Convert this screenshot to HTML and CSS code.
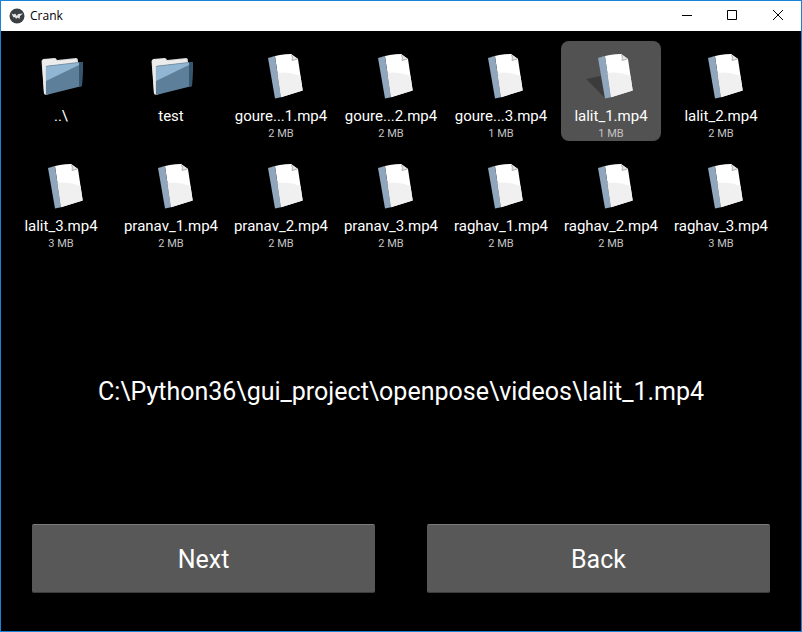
FILE: index.html
```
<!DOCTYPE html>
<html lang="en">
<head>
<meta charset="utf-8">
<title>Crank</title>
<link rel="stylesheet" href="styles.css">
</head>
<body>
<svg class="defs" aria-hidden="true">
  <symbol id="folder" viewBox="0 0 50 50">
    <path d="M5.500 11 7 9 19 8Q20 8 21 10L40 8Q42 8 42 11L42 34 10 45 8 44Z" fill="#d4d4d4"/>
    <path d="M6 11 7 9.500 19 8.500 21 11 40 9 41 12 12 16Q9.500 16 9.500 18L9.500 44 8 43Z" fill="#ececec"/>
    <path d="M10 17Q10 16 12 16L47 12 46 36 10 45Z" fill="#5d7f99"/>
    <path d="M10 17Q10 16 12 16L43 12.500 43 15 10 31Z" fill="#91b6d3"/>
    <path d="M43 12.500 47 12 46 36 43 37Z" fill="#36566e"/>
    <path d="M10 17Q10 16 12 16L43 12.500" fill="none" stroke="#6f8799" stroke-width=".7"/>
  </symbol>
  <symbol id="document" viewBox="0 0 50 50">
    <path d="M0 29 15 26 19 48Z" fill="#000" opacity=".27"/>
    <path d="M12 8Q24 4 35 4L42 9 46.700 40.500 25 47.300 19 6.300Z" fill="#fff"/>
    <path d="M12 8 19 6.300 25 47.300 19 48.500Z" fill="#8fa6bd"/>
    <path d="M21.500 23Q33 21 44.500 26L46.700 40.500 25 47.300Z" fill="#f0f0f0"/>
    <path d="M35 4Q37 7 36 10.500L42 9Z" fill="#e4e4e4"/>
    <path d="M35.500 5Q37 7 36 10.500L41.500 9" fill="none" stroke="#9a9a9a" stroke-width=".7"/>
  </symbol>
</svg>
<div class="window">
  <header class="titlebar">
    <svg class="logo" viewBox="0 0 16 16" aria-hidden="true">
      <circle cx="8" cy="8" r="7.500" fill="#3c3f41"/>
      <path d="M2.500 5.500 5 6.500 6 5.500 8 8 9 6 14 5.500 11 8 10.500 11 8.500 9.500 7 11 6 9 4.500 9.500Z" fill="#e6e6e6"/>
    </svg>
    <h1 class="title">Crank</h1>
    <button class="control" type="button" aria-label="Minimize"><svg viewBox="0 0 12 12"><path d="M2 5.500H12"/></svg></button>
    <button class="control" type="button" aria-label="Maximize"><svg viewBox="0 0 12 12"><path d="M1.500.5H10.500V9.500H1.500Z"/></svg></button>
    <button class="control" type="button" aria-label="Close"><svg viewBox="0 0 12 12"><path d="M1 0 11 10M11 0 1 10"/></svg></button>
  </header>
  <main class="content">
    <section class="files" aria-label="Files">
      <button class="file" type="button"><svg class="icon"><use href="#folder"/></svg><span class="name">..\</span></button>
      <button class="file" type="button"><svg class="icon"><use href="#folder"/></svg><span class="name">test</span></button>
      <button class="file" type="button"><svg class="icon"><use href="#document"/></svg><span class="name">goure...1.mp4</span><span class="size">2 MB</span></button>
      <button class="file" type="button"><svg class="icon"><use href="#document"/></svg><span class="name">goure...2.mp4</span><span class="size">2 MB</span></button>
      <button class="file" type="button"><svg class="icon"><use href="#document"/></svg><span class="name">goure...3.mp4</span><span class="size">1 MB</span></button>
      <button class="file selected" type="button" aria-pressed="true"><svg class="icon"><use href="#document"/></svg><span class="name">lalit_1.mp4</span><span class="size">1 MB</span></button>
      <button class="file" type="button"><svg class="icon"><use href="#document"/></svg><span class="name">lalit_2.mp4</span><span class="size">2 MB</span></button>
      <button class="file" type="button"><svg class="icon"><use href="#document"/></svg><span class="name">lalit_3.mp4</span><span class="size">3 MB</span></button>
      <button class="file" type="button"><svg class="icon"><use href="#document"/></svg><span class="name">pranav_1.mp4</span><span class="size">2 MB</span></button>
      <button class="file" type="button"><svg class="icon"><use href="#document"/></svg><span class="name">pranav_2.mp4</span><span class="size">2 MB</span></button>
      <button class="file" type="button"><svg class="icon"><use href="#document"/></svg><span class="name">pranav_3.mp4</span><span class="size">2 MB</span></button>
      <button class="file" type="button"><svg class="icon"><use href="#document"/></svg><span class="name">raghav_1.mp4</span><span class="size">2 MB</span></button>
      <button class="file" type="button"><svg class="icon"><use href="#document"/></svg><span class="name">raghav_2.mp4</span><span class="size">2 MB</span></button>
      <button class="file" type="button"><svg class="icon"><use href="#document"/></svg><span class="name">raghav_3.mp4</span><span class="size">3 MB</span></button>
    </section>
    <p class="path">C:\Python36\gui_project\openpose\videos\lalit_1.mp4</p>
    <div class="actions">
      <button class="action" type="button">Next</button>
      <button class="action" type="button">Back</button>
    </div>
  </main>
</div>
</body>
</html>
```
FILE: styles.css
```
* {
  box-sizing: border-box;
}

body {
  margin: 0;
  background: #000;
  color: #fff;
  font-family: Roboto, "Liberation Sans", sans-serif;
}

button {
  border: 0;
  padding: 0;
  background: none;
  color: inherit;
  font: inherit;
}

.defs {
  position: absolute;
  width: 0;
  height: 0;
}

.window {
  display: flex;
  flex-direction: column;
  min-height: 100vh;
  border: 1px solid #1a82d8;
}

.titlebar {
  display: flex;
  align-items: center;
  height: 30px;
  padding-left: 8px;
  background: #fff;
  color: #000;
}

.logo {
  width: 16px;
  height: 16px;
}

.title {
  flex: 1;
  margin: 0 0 0 5px;
  font: 400 12px/16px "Open Sans", "Noto Sans", sans-serif;
}

.control {
  display: grid;
  place-items: center;
  width: 46px;
  height: 30px;
}

.control svg {
  width: 12px;
  height: 12px;
  fill: none;
  stroke: #000;
}

.content {
  flex: 1;
  display: flex;
  flex-direction: column;
}

.files {
  display: grid;
  grid-template-columns: repeat(auto-fill, 100px);
  gap: 10px;
  padding: 10px;
}

.file {
  display: flex;
  flex-direction: column;
  align-items: center;
  height: 100px;
  padding-top: 9px;
  border-radius: 8px;
}

.selected {
  background: #525252;
}

.icon {
  width: 50px;
  height: 50px;
  flex: none;
}

.name {
  margin-top: 6px;
  font-size: 15px;
  line-height: 20px;
}

.size {
  color: #c4c4c4;
  font-size: 11px;
  line-height: 16px;
}

.path {
  flex: 1;
  display: flex;
  align-items: center;
  justify-content: center;
  margin: 0;
  padding-bottom: 2px;
  font-size: 25px;
  line-height: 32px;
  overflow-wrap: anywhere;
}

.actions {
  display: grid;
  grid-template-columns: 1fr 1fr;
  gap: 52px;
  padding: 0 31px 38px;
}

.action {
  height: 69px;
  padding-top: 2px;
  border-top: 1px solid #7a7a7a;
  border-bottom: 1px solid #3c3c3c;
  border-radius: 2px;
  background: #585858;
  font-size: 25px;
  line-height: 32px;
}
```
